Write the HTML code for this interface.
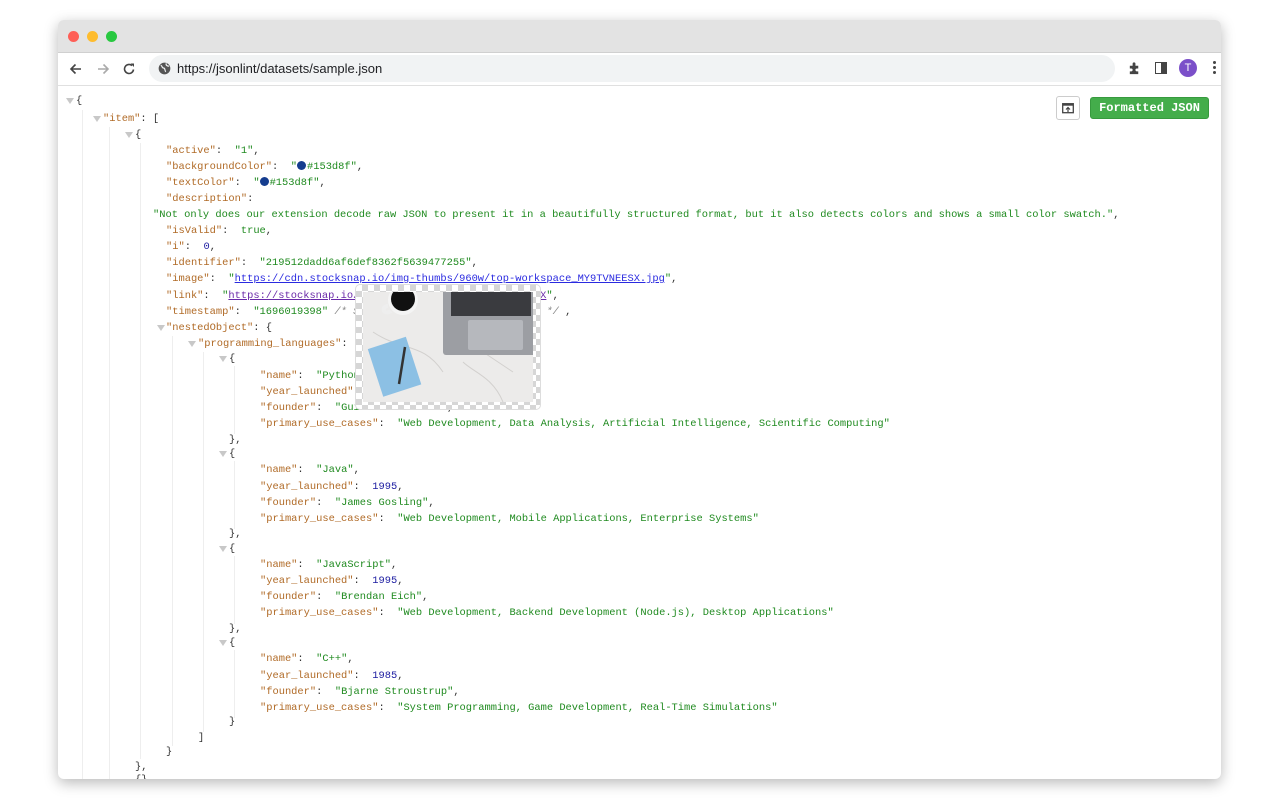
<!DOCTYPE html>
<html><head><meta charset="utf-8"><style>
html,body{margin:0;padding:0;width:1280px;height:800px;background:#fff;overflow:hidden;font-family:"Liberation Sans",sans-serif}
.win{position:absolute;left:58px;top:20px;width:1163px;height:759px;border-radius:6px;overflow:hidden;box-shadow:0 4px 14px rgba(0,0,0,.28);background:#fff}
.title{position:absolute;left:0;top:0;width:100%;height:32px;background:#e3e3e3;border-bottom:1px solid #d0d0d0}
.dot{position:absolute;top:11px;width:11px;height:11px;border-radius:50%}
.tb{position:absolute;left:0;top:33px;width:100%;height:32px;background:#fff;border-bottom:1px solid #e0e0e0}
.url{position:absolute;left:91px;top:2px;width:966px;height:27px;border-radius:14px;background:#f1f3f4;font-size:13px;color:#202124;line-height:27px}
.c{position:absolute;font-family:"Liberation Mono",monospace;font-size:10.4px;line-height:12px;white-space:pre;color:#333}
.k{color:#b06a26}.s{color:#1f8a1f}.n{color:#1a1aa0}.l{color:#2a2ae0;text-decoration:underline}.m{color:#888;font-style:italic}
.g{position:absolute;width:1px;background:#eee}
.t{position:absolute;width:0;height:0;border-left:4px solid transparent;border-right:4px solid transparent;border-top:6px solid #c8c8c8}
.sw{display:inline-block;width:9px;height:9px;border-radius:50%;background:#153d8f;vertical-align:-1px;margin-right:1px}
</style></head><body>
<div class="win">
<div class="title">
<div class="dot" style="left:10px;background:#fe5f57"></div>
<div class="dot" style="left:29px;background:#febc2e"></div>
<div class="dot" style="left:48px;background:#28c840"></div>
</div>
<div class="tb">
<svg style="position:absolute;left:10px;top:8px" width="16" height="16" viewBox="0 0 16 16"><path d="M13 8H3M7.5 3.5L3 8l4.5 4.5" stroke="#444" stroke-width="1.6" fill="none"/></svg>
<svg style="position:absolute;left:37px;top:8px" width="16" height="16" viewBox="0 0 16 16"><path d="M3 8h10M8.5 3.5L13 8l-4.5 4.5" stroke="#aaa" stroke-width="1.6" fill="none"/></svg>
<svg style="position:absolute;left:63px;top:8px" width="16" height="16" viewBox="0 0 16 16"><path d="M12.5 8.5A4.5 4.5 0 1 1 11 4.6" stroke="#444" stroke-width="1.6" fill="none"/><path d="M9.5 2.5h3.5v3.5z" fill="#444"/></svg>
<div class="url"><svg style="position:absolute;left:9px;top:7px" width="13" height="13" viewBox="0 0 14 14"><circle cx="7" cy="7" r="6.3" fill="#555"/><path d="M3 3.5c2 1 1 3 3 3s1 3 2.5 4M9 1.5c-1 2 1 3 3 3" stroke="#f1f3f4" stroke-width="1.3" fill="none"/></svg><span style="position:absolute;left:28px">https://jsonlint/datasets/sample.json</span></div>
<svg style="position:absolute;left:1069px;top:8px" width="15" height="15" viewBox="0 0 16 16"><path d="M3 5h3V3a1.5 1.5 0 0 1 3 0v2h3v3h-1.5a1.5 1.5 0 0 0 0 3H12v3H3v-3h1.5a1.5 1.5 0 0 0 0-3H3z" fill="#444"/></svg>
<div style="position:absolute;left:1097px;top:9px;width:10px;height:10px;border:1.5px solid #444"><div style="position:absolute;right:0;top:0;width:5px;height:10px;background:#444"></div></div>
<div style="position:absolute;left:1121px;top:6px;width:18px;height:18px;border-radius:50%;background:#7b4fc9;color:#fff;font-size:11px;text-align:center;line-height:18px">T</div>
<div style="position:absolute;left:1155px;top:8px;width:3px;font-size:0"><div style="width:3px;height:3px;background:#444;border-radius:50%;margin-bottom:2px"></div><div style="width:3px;height:3px;background:#444;border-radius:50%;margin-bottom:2px"></div><div style="width:3px;height:3px;background:#444;border-radius:50%"></div></div>
</div>
</div>

<div style="position:absolute;left:58px;top:86px;width:1163px;height:693px;overflow:hidden">
<div style="position:absolute;left:-58px;top:-84px;width:1280px;height:800px">
<div class="g" style="left:82px;top:108px;height:700px"></div>
<div class="g" style="left:109px;top:125px;height:700px"></div>
<div class="g" style="left:140px;top:141px;height:616px"></div>
<div class="g" style="left:172px;top:334px;height:410px"></div>
<div class="g" style="left:203px;top:350px;height:380px"></div>
<div class="g" style="left:234px;top:364px;height:68px"></div>
<div class="g" style="left:234px;top:459px;height:68px"></div>
<div class="g" style="left:234px;top:554px;height:68px"></div>
<div class="g" style="left:234px;top:648px;height:68px"></div>

<div class="t" style="left:66px;top:96px"></div><div class="c" style="left:76px;top:93px">{</div>
<div class="t" style="left:93px;top:114px"></div><div class="c" style="left:103px;top:111px"><span class="k">"item"</span>: [</div>
<div class="t" style="left:125px;top:130px"></div><div class="c" style="left:135px;top:127px">{</div>
<div class="c" style="left:166px;top:143px"><span class="k">"active"</span>:  <span class="s">"1"</span>,</div>
<div class="c" style="left:166px;top:159px"><span class="k">"backgroundColor"</span>:  <span class="s">"<span class="sw"></span>#153d8f"</span>,</div>
<div class="c" style="left:166px;top:175px"><span class="k">"textColor"</span>:  <span class="s">"<span class="sw"></span>#153d8f"</span>,</div>
<div class="c" style="left:166px;top:191px"><span class="k">"description"</span>:</div>
<div class="c" style="left:153px;top:207px"><span class="s">"Not only does our extension decode raw JSON to present it in a beautifully structured format, but it also detects colors and shows a small color swatch."</span>,</div>
<div class="c" style="left:166px;top:223px"><span class="k">"isValid"</span>:  <span class="s">true</span>,</div>
<div class="c" style="left:166px;top:239px"><span class="k">"i"</span>:  <span class="n">0</span>,</div>
<div class="c" style="left:166px;top:255px"><span class="k">"identifier"</span>:  <span class="s">"219512dadd6af6def8362f5639477255"</span>,</div>
<div class="c" style="left:166px;top:271px"><span class="k">"image"</span>:  <span class="s">"</span><span class="l">https://cdn.stocksnap.io/img-thumbs/960w/top-workspace_MY9TVNEESX.jpg</span><span class="s">"</span>,</div>
<div class="c" style="left:166px;top:288px"><span class="k">"link"</span>:  <span class="s">"</span><span class="l" style="color:#6a2aa8">https://stocksnap.io/photo/top-workspace-MY9TVNEESX</span><span class="s">"</span>,</div>
<div class="c" style="left:166px;top:304px"><span class="k">"timestamp"</span>:  <span class="s">"1696019398"</span> <span class="m">/* Sat Sep 30 2023 4:29:58 PM EDT */</span> ,</div>
<div class="t" style="left:157px;top:323px"></div><div class="c" style="left:166px;top:320px"><span class="k">"nestedObject"</span>: {</div>
<div class="t" style="left:188px;top:339px"></div><div class="c" style="left:198px;top:336px"><span class="k">"programming_languages"</span>: [</div>

<div class="t" style="left:219px;top:354px"></div><div class="c" style="left:229px;top:351px">{</div>
<div class="c" style="left:260px;top:368px"><span class="k">"name"</span>:  <span class="s">"Python"</span>,</div>
<div class="c" style="left:260px;top:384px"><span class="k">"year_launched"</span>:  <span class="n">1991</span>,</div>
<div class="c" style="left:260px;top:400px"><span class="k">"founder"</span>:  <span class="s">"Guido van Rossum"</span>,</div>
<div class="c" style="left:260px;top:416px"><span class="k">"primary_use_cases"</span>:  <span class="s">"Web Development, Data Analysis, Artificial Intelligence, Scientific Computing"</span></div>
<div class="c" style="left:229px;top:432px">},</div>

<div class="t" style="left:219px;top:449px"></div><div class="c" style="left:229px;top:446px">{</div>
<div class="c" style="left:260px;top:462px"><span class="k">"name"</span>:  <span class="s">"Java"</span>,</div>
<div class="c" style="left:260px;top:479px"><span class="k">"year_launched"</span>:  <span class="n">1995</span>,</div>
<div class="c" style="left:260px;top:495px"><span class="k">"founder"</span>:  <span class="s">"James Gosling"</span>,</div>
<div class="c" style="left:260px;top:511px"><span class="k">"primary_use_cases"</span>:  <span class="s">"Web Development, Mobile Applications, Enterprise Systems"</span></div>
<div class="c" style="left:229px;top:526px">},</div>

<div class="t" style="left:219px;top:544px"></div><div class="c" style="left:229px;top:541px">{</div>
<div class="c" style="left:260px;top:557px"><span class="k">"name"</span>:  <span class="s">"JavaScript"</span>,</div>
<div class="c" style="left:260px;top:573px"><span class="k">"year_launched"</span>:  <span class="n">1995</span>,</div>
<div class="c" style="left:260px;top:589px"><span class="k">"founder"</span>:  <span class="s">"Brendan Eich"</span>,</div>
<div class="c" style="left:260px;top:605px"><span class="k">"primary_use_cases"</span>:  <span class="s">"Web Development, Backend Development (Node.js), Desktop Applications"</span></div>
<div class="c" style="left:229px;top:621px">},</div>

<div class="t" style="left:219px;top:638px"></div><div class="c" style="left:229px;top:635px">{</div>
<div class="c" style="left:260px;top:651px"><span class="k">"name"</span>:  <span class="s">"C++"</span>,</div>
<div class="c" style="left:260px;top:668px"><span class="k">"year_launched"</span>:  <span class="n">1985</span>,</div>
<div class="c" style="left:260px;top:684px"><span class="k">"founder"</span>:  <span class="s">"Bjarne Stroustrup"</span>,</div>
<div class="c" style="left:260px;top:700px"><span class="k">"primary_use_cases"</span>:  <span class="s">"System Programming, Game Development, Real-Time Simulations"</span></div>
<div class="c" style="left:229px;top:714px">}</div>
<div class="c" style="left:198px;top:730px">]</div>
<div class="c" style="left:166px;top:744px">}</div>
<div class="c" style="left:135px;top:759px">},</div>
<div class="c" style="left:135px;top:772px">{}</div>

<div style="position:absolute;left:356px;top:283px;width:184px;height:124px;border-radius:4px;background-color:#fff;background-image:linear-gradient(45deg,#d6d6d6 25%,transparent 25%,transparent 75%,#d6d6d6 75%),linear-gradient(45deg,#d6d6d6 25%,transparent 25%,transparent 75%,#d6d6d6 75%);background-size:12px 12px;background-position:0 0,6px 6px;box-shadow:0 0 0 1px #ddd">
<svg style="position:absolute;left:7px;top:7px" width="170" height="110" viewBox="0 0 170 110">
<rect width="170" height="110" fill="#ecebea"/>
<path d="M10 40C40 60 60 50 80 80M100 70c10 10 30 15 40 40M120 60l30 20" stroke="#d2d0ce" fill="none"/>
<circle cx="40" cy="8" r="15" fill="#f4f4f4"/><circle cx="40" cy="7" r="12" fill="#111"/>
<path d="M25 14c-4 0-6 4-3 6 2 1 5 0 6-1" stroke="#eee" stroke-width="4" fill="none"/>
<rect x="80" y="-5" width="95" height="68" rx="3" fill="#9c9ea3"/>
<rect x="88" y="0" width="80" height="24" fill="#3a3b3f"/>
<rect x="105" y="28" width="55" height="30" rx="2" fill="#b6b8bd"/>
<g transform="rotate(-18 30 70)"><rect x="10" y="50" width="40" height="50" fill="#8cc0e4"/></g>
<path d="M42 55L36 92" stroke="#333" stroke-width="2.5"/>
</svg>
</div>

<div style="position:absolute;left:1056px;top:94px;width:24px;height:24px;border:1px solid #ccc;border-radius:3px;box-sizing:border-box"><svg style="position:absolute;left:5px;top:5px" width="12" height="12" viewBox="0 0 12 12"><rect x="0.7" y="1.7" width="10.6" height="9" fill="none" stroke="#444" stroke-width="1.3"/><rect x="0.7" y="1.7" width="10.6" height="2" fill="#444"/><path d="M6 10V5.5M4 7.5l2-2 2 2" stroke="#444" stroke-width="1.2" fill="none"/></svg></div>
<div style="position:absolute;left:1090px;top:95px;width:119px;height:22px;background:#44ad4b;border:1px solid #379a3e;border-radius:3px;box-sizing:border-box;color:#fff;font-family:'Liberation Mono',monospace;font-size:12px;line-height:20px;text-align:center;font-weight:bold">Formatted JSON</div>
</div></div>
</body></html>
